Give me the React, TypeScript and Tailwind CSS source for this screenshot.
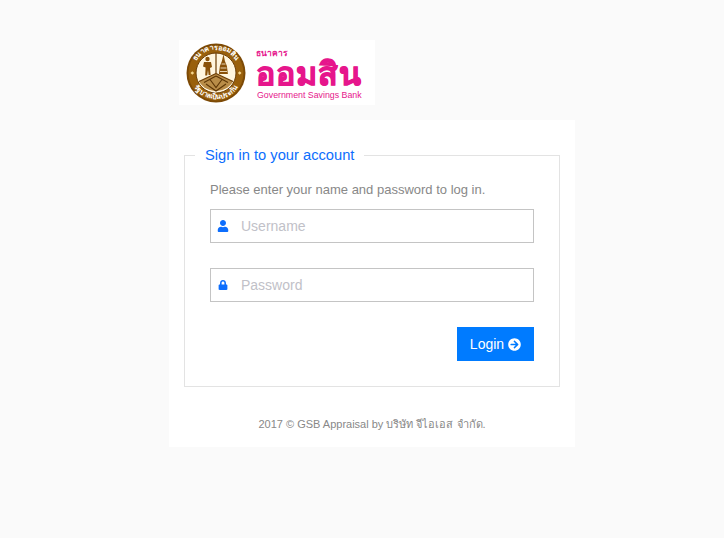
import { FaArrowCircleRight, FaLock, FaUser } from "react-icons/fa";

const thaiFont = "font-['Liberation_Sans','Noto_Sans','DejaVu_Sans',sans-serif]";

const Seal = () => (
  <svg width="60" height="60" viewBox="0 0 60 60" className="shrink-0">
    <circle cx="30" cy="30" r="29.5" fill="#7d4a06" />
    <circle cx="30" cy="30" r="27.5" fill="#99600c" />
    <circle cx="30" cy="30" r="20" fill="#fff6df" />
    <circle cx="30" cy="30" r="20" fill="none" stroke="#6b3d05" strokeWidth="1" />
    <defs>
      <path id="sealTop" d="M 6.5 30 A 23.5 23.5 0 0 1 53.5 30" />
      <path id="sealBottom" d="M 4 30 A 26 26 0 0 0 56 30" />
    </defs>
    <text fontSize="7" fontWeight="700" fill="#fff" fontFamily="'Noto Sans','DejaVu Sans',sans-serif">
      <textPath href="#sealTop" startOffset="50%" textAnchor="middle">ธนาคารออมสิน</textPath>
    </text>
    <text fontSize="7" fontWeight="700" fill="#fff" fontFamily="'Noto Sans','DejaVu Sans',sans-serif">
      <textPath href="#sealBottom" startOffset="50%" textAnchor="middle">รัฐบาลเป็นประกัน</textPath>
    </text>
    <path d="M4.5 30l1.8-1.8L8.1 30l-1.8 1.8zM51.9 30l1.8-1.8L55.5 30l-1.8 1.8z" fill="#f6d58a" />
    <path d="M30 30.5L13 38.5a20 20 0 0 0 34 0z" fill="#b98d48" />
    <path d="M30 33l-12 6.5M30 33l12 6.5M24 36.5l6 8 6-8M20 41l10 7 10-7" stroke="#5d3606" strokeWidth="1.1" fill="none" />
    <path d="M30 10v21M30 30.5L13 38.5M30 30.5l17 8" stroke="#6b3d05" strokeWidth="1.2" fill="none" />
    <circle cx="21.5" cy="16" r="2.2" fill="#8a5208" />
    <path d="M18 19h7l1 5-2 1 .6 7h-2l-.6-5-.8 5.5h-2l.4-8-2.6-1z" fill="#8a5208" />
    <path d="M37.5 11l1.4 7 2 5 1 8h-9l1-8 2-5z" fill="#8a5208" />
    <path d="M35.5 21h4M34.5 25h6M34 28.5h7" stroke="#fff6df" strokeWidth=".8" />
  </svg>
);

const Logo = () => (
  <div className="flex h-[65px] w-[196px] items-center gap-[10px] bg-white pl-[7px]">
    <Seal />
    <div className={`flex flex-col pt-1 text-[#e6168c] ${thaiFont}`}>
      <span className="text-[8.5px] font-bold leading-[9px]">ธนาคาร</span>
      <span className="text-[32px] font-bold leading-[32px] tracking-[1px] [-webkit-text-stroke:1px_#e6168c]">ออมสิน</span>
      <span className="pl-px text-[8.8px] leading-[11px]">Government Savings Bank</span>
    </div>
  </div>
);

export default function App() {
  return (
    <div className="flex min-h-[538px] flex-col items-center bg-[#fafafa] pl-5 pt-10 font-['Liberation_Sans',sans-serif]">
      <div className="w-[406px]">
        <div className="pl-2.5">
          <Logo />
        </div>

        <div className="mt-[15px] bg-white px-[15px] pb-[13px] pt-[26px]">
          <fieldset className="h-[241px] border border-[#e3e3e3] px-[25px]">
            <legend className="ml-[-15px] px-2.5 text-[14.7px] leading-[18px] text-[#0d6efd]">Sign in to your account</legend>

            <p className="mt-4 text-[13px] leading-5 text-[#888888]">Please enter your name and password to log in.</p>

            <form className="mt-[9px] flex flex-col gap-[25px]" onSubmit={(e) => e.preventDefault()}>
              <label className="flex h-[34px] items-center border border-[#c4c4c4] bg-white">
                <FaUser className="ml-[6px] size-3 shrink-0 text-[#0d6efd]" />
                <input
                  placeholder="Username"
                  className="ml-[12px] w-full text-sm outline-none placeholder:text-[#c1c1c8]"
                />
              </label>

              <label className="flex h-[34px] items-center border border-[#c4c4c4] bg-white">
                <FaLock className="ml-[7px] size-[10px] shrink-0 text-[#0d6efd]" />
                <input
                  placeholder="Password"
                  type="password"
                  className="ml-[13px] w-full text-sm outline-none placeholder:text-[#c1c1c8]"
                />
              </label>

              <button className="flex h-[34px] w-[77px] items-center justify-center gap-1 self-end bg-[#007bff] text-sm text-white">
                Login <FaArrowCircleRight className="size-[13px]" />
              </button>
            </form>
          </fieldset>

          <p className={`mt-[27px] text-center text-[11px] leading-5 text-[#888888] ${thaiFont}`}>
            2017 © GSB Appraisal by บริษัท จีไอเอส จำกัด.
          </p>
        </div>
      </div>
    </div>
  );
}
